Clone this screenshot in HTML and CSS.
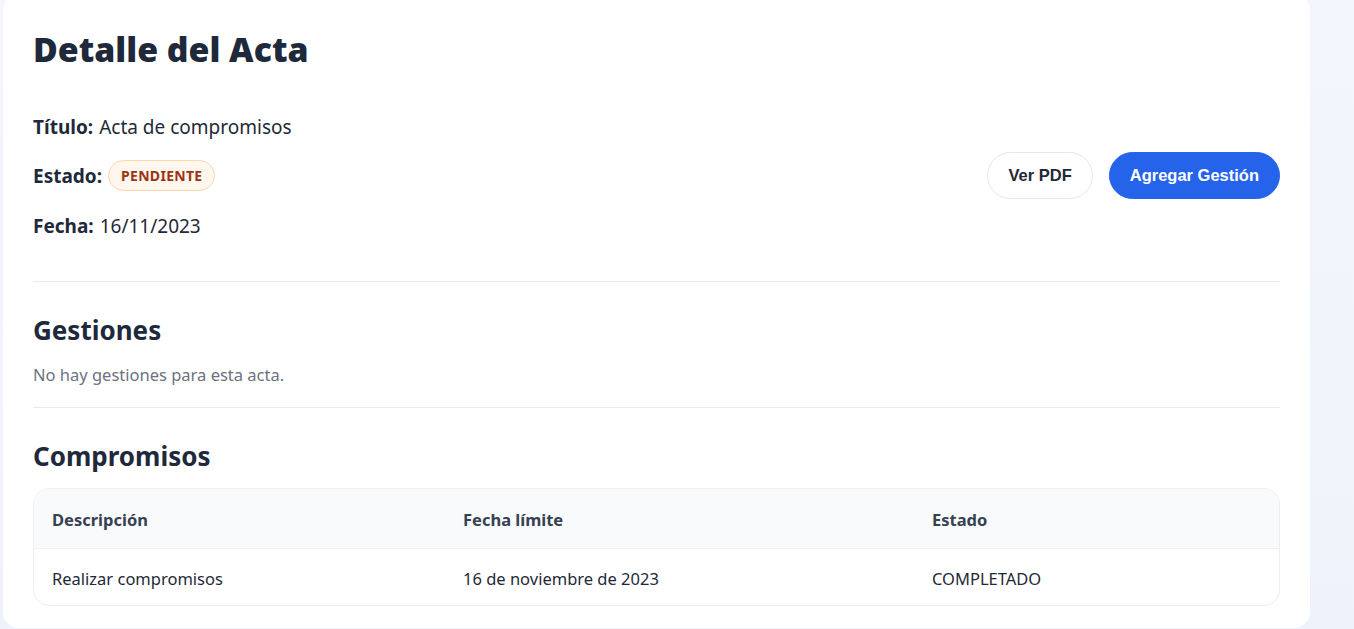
FILE: index.html
```html
<!DOCTYPE html>
<html lang="es">
<head>
<meta charset="utf-8">
<title>Detalle del Acta</title>
<link rel="stylesheet" href="styles.css">
</head>
<body>
<main class="card">
  <h1 class="title">Detalle del Acta</h1>
  <section class="summary">
    <div class="info">
      <p class="info-row row-title"><strong>Título:</strong> Acta de compromisos</p>
      <p class="info-row row-state"><strong>Estado:</strong> <span class="badge">PENDIENTE</span></p>
      <p class="info-row row-date"><strong>Fecha:</strong> 16/11/2023</p>
    </div>
    <div class="actions">
      <button class="btn btn-outline">Ver PDF</button>
      <button class="btn btn-primary">Agregar Gestión</button>
    </div>
  </section>
  <hr class="divider">
  <section class="block">
    <h2 class="subtitle">Gestiones</h2>
    <p class="empty">No hay gestiones para esta acta.</p>
  </section>
  <hr class="divider">
  <section class="block">
    <h2 class="subtitle">Compromisos</h2>
    <div class="table-wrap">
      <table class="table">
        <thead>
          <tr><th class="c1">Descripción</th><th class="c2">Fecha límite</th><th class="c3">Estado</th></tr>
        </thead>
        <tbody>
          <tr><td>Realizar compromisos</td><td>16 de noviembre de 2023</td><td>COMPLETADO</td></tr>
        </tbody>
      </table>
    </div>
  </section>
</main>
</body>
</html>
```

FILE: styles.css
```css
* { box-sizing: border-box; }
html, body { margin: 0; padding: 0; }
body {
  font-family: "Noto Sans", "Open Sans", sans-serif;
  color: #1f2937;
  background: linear-gradient(180deg, #f3f6fc 0%, #eef3fb 100%);
  height: 629px;
  overflow: hidden;
}
.card {
  margin: -6px 0 0 3px;
  width: 1307px;
  background: #fff;
  border-radius: 16px;
  padding: 31px 30px 22px 30px;
}
.title {
  margin: 0;
  font-size: 33.8px;
  font-weight: 900;
  color: #1e293b;
  line-height: 48px;
}
.summary {
  display: flex;
  align-items: center;
  justify-content: space-between;
  margin-top: 41px;
  padding-bottom: 42px;
}
.info { display: flex; flex-direction: column; }
.info-row {
  margin: 0;
  font-size: 19px;
  line-height: 26px;
  color: #1f2937;
  display: flex;
  align-items: center;
  gap: 6px;
}
.row-state { margin-top: 20px; }
.row-date { margin-top: 22px; }
.info-row strong { font-weight: 700; color: #1e293b; }
.badge {
  display: inline-flex;
  align-items: center;
  height: 31px;
  padding: 0 12px;
  border-radius: 999px;
  background: #fff7ed;
  border: 1px solid #fed7aa;
  color: #9a3412;
  font-size: 14px;
  font-weight: 700;
  letter-spacing: 0.3px;
}
.actions { display: flex; gap: 16px; align-items: center; margin-top: -2px; }
.btn {
  height: 47px;
  border-radius: 999px;
  font-family: "Liberation Sans", Arial, sans-serif;
  font-weight: 700;
  font-size: 16.5px;
  cursor: pointer;
}
.btn-outline {
  background: #fff;
  border: 1px solid #e5e7eb;
  color: #1f2937;
  padding: 0 20px;
}
.btn-primary {
  background: #2563eb;
  border: 1px solid #2563eb;
  color: #fff;
  padding: 0 20px;
}
.divider {
  border: 0;
  border-top: 1px solid #e9ebef;
  margin: 0;
}
.block { padding-top: 31px; }
.subtitle {
  margin: 0;
  font-size: 26px;
  font-weight: 700;
  color: #1e293b;
  line-height: 34px;
}
.empty {
  margin: 16px 0 20px;
  color: #6b7280;
  font-size: 16.5px;
  line-height: 24px;
}
.table-wrap {
  margin-top: 15px;
  border: 1px solid #eceef2;
  border-radius: 16px;
  overflow: hidden;
}
.table { width: 100%; border-collapse: collapse; }
.table th, .table td {
  text-align: left;
  padding: 3px 18px 0;
  font-size: 16.5px;
}
.table th {
  background: #f8fafc;
  font-weight: 700;
  color: #374151;
  height: 59px;
  border-bottom: 1px solid #eef0f3;
}
.table td { height: 57px; color: #1f2937; }
.c1 { width: 411px; }
.c2 { width: 469px; }
```
